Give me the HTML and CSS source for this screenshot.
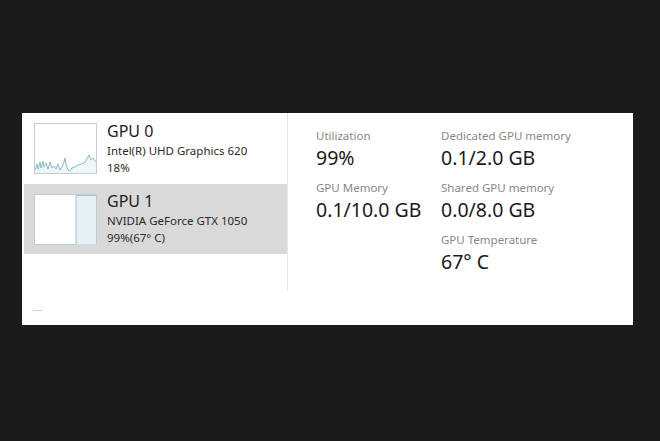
FILE: index.html
```html
<!DOCTYPE html>
<html>
<head>
<meta charset="utf-8">
<link rel="stylesheet" href="styles.css">
</head>
<body>
<div class="panel">
  <div class="left">
    <div class="list">
      <div class="row">
        <svg class="thumb" width="63" height="51" viewBox="0 0 63 51">
          <rect x="0.5" y="0.5" width="62" height="50" fill="#fff" stroke="#bfd0d4"/>
          <polygon points="1,47 3,41 4,46 6,39 7,45 9,38 10,44 12,40 14,46 16,39 18,45 20,43 22,46 24,41 26,47 28,44 30,39 31,35 32,41 34,47 36,48 38,45 41,44 44,42 47,41 50,40 52,37 54,34 55,32 57,37 59,35 61,38 62,39 62,50 1,50" fill="#eef6f7" stroke="none"/>
          <polyline points="1,47 3,41 4,46 6,39 7,45 9,38 10,44 12,40 14,46 16,39 18,45 20,43 22,46 24,41 26,47 28,44 30,39 31,35 32,41 34,47 36,48 38,45 41,44 44,42 47,41 50,40 52,37 54,34 55,32 57,37 59,35 61,38 62,39" fill="none" stroke="#7db4bd" stroke-width="0.9"/>
        </svg>
        <div class="info">
          <div class="title">GPU 0</div>
          <div class="sub">Intel(R) UHD Graphics 620</div>
          <div class="sub">18%</div>
        </div>
      </div>
      <div class="row selected">
        <svg class="thumb" width="63" height="51" viewBox="0 0 63 51">
          <rect x="0.5" y="0.5" width="62" height="50" fill="#fff" stroke="#bccdd6"/>
          <rect x="42" y="1.5" width="20" height="49" fill="#e6f0f7"/>
          <polyline points="42,50 42,1.5 62,1.5" fill="none" stroke="#9fc0d2" stroke-width="1"/>
        </svg>
        <div class="info">
          <div class="title">GPU 1</div>
          <div class="sub">NVIDIA GeForce GTX 1050</div>
          <div class="sub">99%(67° C)</div>
        </div>
      </div>
    </div>
    <div class="dash"></div>
  </div>
  <div class="right">
    <div class="stats">
      <div class="stat">
        <div class="label">Utilization</div>
        <div class="value">99%</div>
      </div>
      <div class="stat">
        <div class="label">Dedicated GPU memory</div>
        <div class="value">0.1/2.0 GB</div>
      </div>
      <div class="stat">
        <div class="label">GPU Memory</div>
        <div class="value">0.1/10.0 GB</div>
      </div>
      <div class="stat">
        <div class="label">Shared GPU memory</div>
        <div class="value">0.0/8.0 GB</div>
      </div>
      <div class="stat empty"></div>
      <div class="stat">
        <div class="label">GPU Temperature</div>
        <div class="value">67° C</div>
      </div>
    </div>
  </div>
</div>
</body>
</html>
```

FILE: styles.css
```css
html, body {
  margin: 0;
  padding: 0;
}
body {
  width: 660px;
  height: 441px;
  background: #1b1b1b;
  font-family: "Noto Sans", "Open Sans", sans-serif;
  overflow: hidden;
}
.panel {
  margin: 113px 0 0 22px;
  width: 611px;
  height: 212px;
  background: #ffffff;
  display: flex;
}
.left {
  width: 266px;
  display: flex;
  flex-direction: column;
}
.list {
  height: 178px;
  border-right: 1px solid #e6e6e6;
}
.row {
  height: 71px;
  display: flex;
  align-items: flex-start;
  padding-left: 12px;
  box-sizing: border-box;
}
.row.selected {
  height: 70px;
  background: #d9d9d9;
  margin-left: 2px;
  padding-left: 10px;
}
.thumb {
  display: block;
  margin-top: 10px;
  flex: none;
}
.info {
  margin-left: 10px;
  padding-top: 7px;
}
.row.selected .info {
  padding-top: 6px;
}
.title {
  font-size: 16px;
  line-height: 23px;
  color: #1e1e1e;
}
.sub {
  font-size: 11.5px;
  line-height: 16.5px;
  color: #2a2a2a;
}
.dash {
  width: 9px;
  height: 1px;
  background: #d0d0d0;
  margin: 19px 0 0 11px;
}
.right {
  flex: 1;
  padding: 15px 0 0 28px;
}
.stats {
  display: grid;
  grid-template-columns: 125px auto;
  row-gap: 8px;
}
.label {
  font-size: 11.5px;
  line-height: 16px;
  color: #888888;
}
.value {
  font-size: 19.5px;
  line-height: 28px;
  color: #1a1a1a;
}
```
